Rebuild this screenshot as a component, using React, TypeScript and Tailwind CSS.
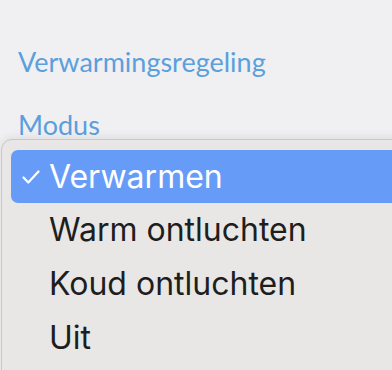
import React from "react";

export default function App() {
  const items = ["Verwarmen", "Warm ontluchten", "Koud ontluchten", "Uit"];
  return (
    <div className="relative w-[392px] h-[370px] overflow-hidden bg-[#f0f0f3]">
      <div className="px-[18px] pt-[46px] font-['Lato',sans-serif] text-[#5b9fdc]">
        <div className="text-[27px] leading-[32px]">Verwarmingsregeling</div>
        <div className="mt-[31px] text-[27px] leading-[32px]">Modus</div>
      </div>
      <div className="absolute left-[1px] top-[139px] w-[420px] h-[260px] rounded-[11px] border border-[#c9c8c7] bg-[#e8e7e5] shadow-[0_-2px_8px_rgba(0,0,0,0.08)] pt-[10px] pl-[9px] font-['Inter','Liberation_Sans',sans-serif]">
        {items.map((t, i) => (
          <div
            key={t}
            className={
              i === 0
                ? "flex items-center h-[53px] rounded-[7px] bg-[#669cf8] text-white"
                : "flex items-center h-[54px] text-[#1e1e1e]"
            }
          >
            <span className="w-[38px] flex justify-center pl-[2px]">
              {i === 0 && (
                <svg width="18" height="14" viewBox="0 0 18 14" fill="none">
                  <path d="M1.5 7.5 L6.3 12.5 L16.5 1.5" stroke="white" strokeWidth="2.2" strokeLinecap="round" strokeLinejoin="round" />
                </svg>
              )}
            </span>
            <span className="text-[32px] leading-none">{t}</span>
          </div>
        ))}
      </div>
    </div>
  );
}
